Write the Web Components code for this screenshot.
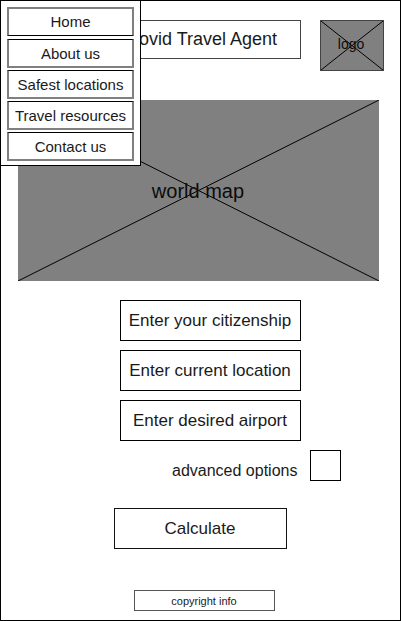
<!DOCTYPE html>
<html lang="en"><head><meta charset="utf-8"><title>Covid Travel Agent</title>
<style>html,body{margin:0;background:#fff}</style></head><body>
<travel-page></travel-page>
<script>
function define(name, html) {
  const t = document.createElement('template');
  t.innerHTML = html;
  customElements.define(name, class extends HTMLElement {
    constructor() { super(); this.attachShadow({mode:'open'}).append(t.content.cloneNode(true)); }
  });
}
define('text-box', `<style>
:host{box-sizing:border-box;display:flex;align-items:center;justify-content:center;border:1px solid var(--line,#000);background:#fff;white-space:nowrap}
span{display:block;transform:translate(var(--dx,0px),var(--dy,0px))}
</style><span><slot></slot></span>`);
define('crossed-image', `<style>
:host{display:grid;place-items:center;box-sizing:border-box;background:#808080;color:#0c0c0c}
svg,span{grid-area:1/1}svg{width:100%;height:100%;display:block}
span{transform:translate(var(--dx,0px),var(--dy,0px))}
</style><span><slot></slot></span><svg viewBox="0 0 100 100" preserveAspectRatio="none"><path d="M0 0L100 100M100 0L0 100" stroke="#000" stroke-width="1" vector-effect="non-scaling-stroke"/></svg>`);
define('side-menu', `<style>
:host{position:absolute;left:-1px;top:-1px;box-sizing:border-box;width:141px;height:166px;border:1px solid #000;background:#fff;padding:6px;display:flex;flex-direction:column;gap:2px;font-size:15px}
text-box{width:127px;height:29px;flex:none;border-width:2px;--line:#808080}
text-box.first{margin-bottom:1px;border-bottom:1px solid #000}
text-box:not(.first){border-top:1px solid #000;--dy:1px}
</style><text-box class="first">Home</text-box><text-box>About us</text-box><text-box>Safest locations</text-box><text-box>Travel resources</text-box><text-box>Contact us</text-box>`);
define('travel-page', `<style>
:host{position:relative;display:flex;flex-direction:column;box-sizing:border-box;width:401px;height:621px;border:1px solid #000;background:#fff;font-family:"Liberation Sans",Arial,sans-serif;color:#1a1a1a;font-size:17px;line-height:1.2}
header{display:flex;justify-content:space-between;margin:19px 16px 0 99px}
.title{width:201px;height:39px;font-size:18px;--line:#444;--dx:1px}
.logo{width:64px;height:51px;font-size:14px;border:1px solid #444;--dx:-1px;--dy:-1px}
.map{width:361px;height:181px;margin:29px 0 0 17px;font-size:20px;--dx:-.5px}
form{display:flex;flex-direction:column;gap:9px;margin:19px 0 0 119px}
form text-box{width:181px;height:41px;--dx:-.5px;--dy:1px}
.opt{display:flex;align-items:center;justify-content:space-between;width:169px;margin-left:52px;font-size:16px}
.opt i{box-sizing:border-box;width:31px;height:31px;border:1px solid #000}
.opt span{position:relative;top:5px}
.calc{width:173px;height:41px;margin:27px 0 0 113px;--line:#111;--dx:-.5px;--dy:1px}
.copy{width:141px;height:21px;margin:41px 0 0 133px;font-size:11px;--line:#555;--dx:-.5px;--dy:1px}
</style><header><text-box class="title">Covid Travel Agent</text-box><crossed-image class="logo">logo</crossed-image></header>
<crossed-image class="map">world map</crossed-image>
<form><text-box>Enter your citizenship</text-box><text-box>Enter current location</text-box><text-box>Enter desired airport</text-box>
<div class="opt"><span>advanced options</span><i></i></div></form>
<text-box class="calc">Calculate</text-box><text-box class="copy">copyright info</text-box><side-menu></side-menu>`);
</script></body></html>
